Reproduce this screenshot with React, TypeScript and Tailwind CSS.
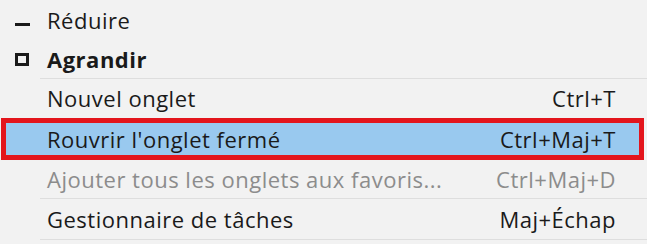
import React from 'react';

type Item = {
  label: string;
  shortcut?: string;
  icon?: 'min' | 'max';
  bold?: boolean;
  disabled?: boolean;
  selected?: boolean;
  h: string;
  sep?: boolean;
};

const items: Item[] = [
  { label: 'Réduire', icon: 'min', h: 'h-[40px]' },
  { label: 'Agrandir', icon: 'max', bold: true, h: 'h-[38px]', sep: true },
  { label: 'Nouvel onglet', shortcut: 'Ctrl+T', h: 'h-[39px]' },
  { label: "Rouvrir l'onglet fermé", shortcut: 'Ctrl+Maj+T', selected: true, h: 'h-[42px]' },
  { label: 'Ajouter tous les onglets aux favoris...', shortcut: 'Ctrl+Maj+D', disabled: true, h: 'h-[38px]', sep: true },
  { label: 'Gestionnaire de tâches', shortcut: 'Maj+Échap', h: 'h-[40px]', sep: true },
];

const MenuIcon = ({ kind }: { kind?: 'min' | 'max' }) => {
  if (kind === 'min') {
    return <span className="block w-[15px] h-[3px] bg-[#1a1a1a] mt-[8px]" />;
  }
  if (kind === 'max') {
    return <span className="block w-[14px] h-[13px] border-[3px] border-[#1a1a1a]" />;
  }
  return null;
};

export default function App() {
  return (
    <div
      className="w-[647px] h-[244px] bg-[#f2f2f2] text-[#1a1a1a] overflow-hidden text-[22px] tracking-[0.5px]"
      style={{ fontFamily: '"Open Sans", "Noto Sans", sans-serif' }}
    >
      {items.map((it) => (
        <div key={it.label}>
          {it.selected ? (
            <div className={`${it.h} ml-[1px] mr-[3px] border-[5px] border-[#e3151c] bg-[#99c9ef] flex items-center pl-[41px] pr-[23px]`}>
              <span className="flex-1 whitespace-nowrap">{it.label}</span>
              <span className="whitespace-nowrap">{it.shortcut}</span>
            </div>
          ) : (
            <div
              className={`${it.h} flex items-center pr-[31px] ${it.disabled ? 'text-[#8c8c8c]' : ''}`}
            >
              <span className="w-[47px] pl-[15px] flex items-center">
                <MenuIcon kind={it.icon} />
              </span>
              <span className={`flex-1 whitespace-nowrap ${it.bold ? 'font-bold' : ''}`}>{it.label}</span>
              {it.shortcut && <span className="whitespace-nowrap">{it.shortcut}</span>}
            </div>
          )}
          {it.sep && <div className="ml-[40px] h-[1px] bg-[#dedede]" />}
        </div>
      ))}
    </div>
  );
}
